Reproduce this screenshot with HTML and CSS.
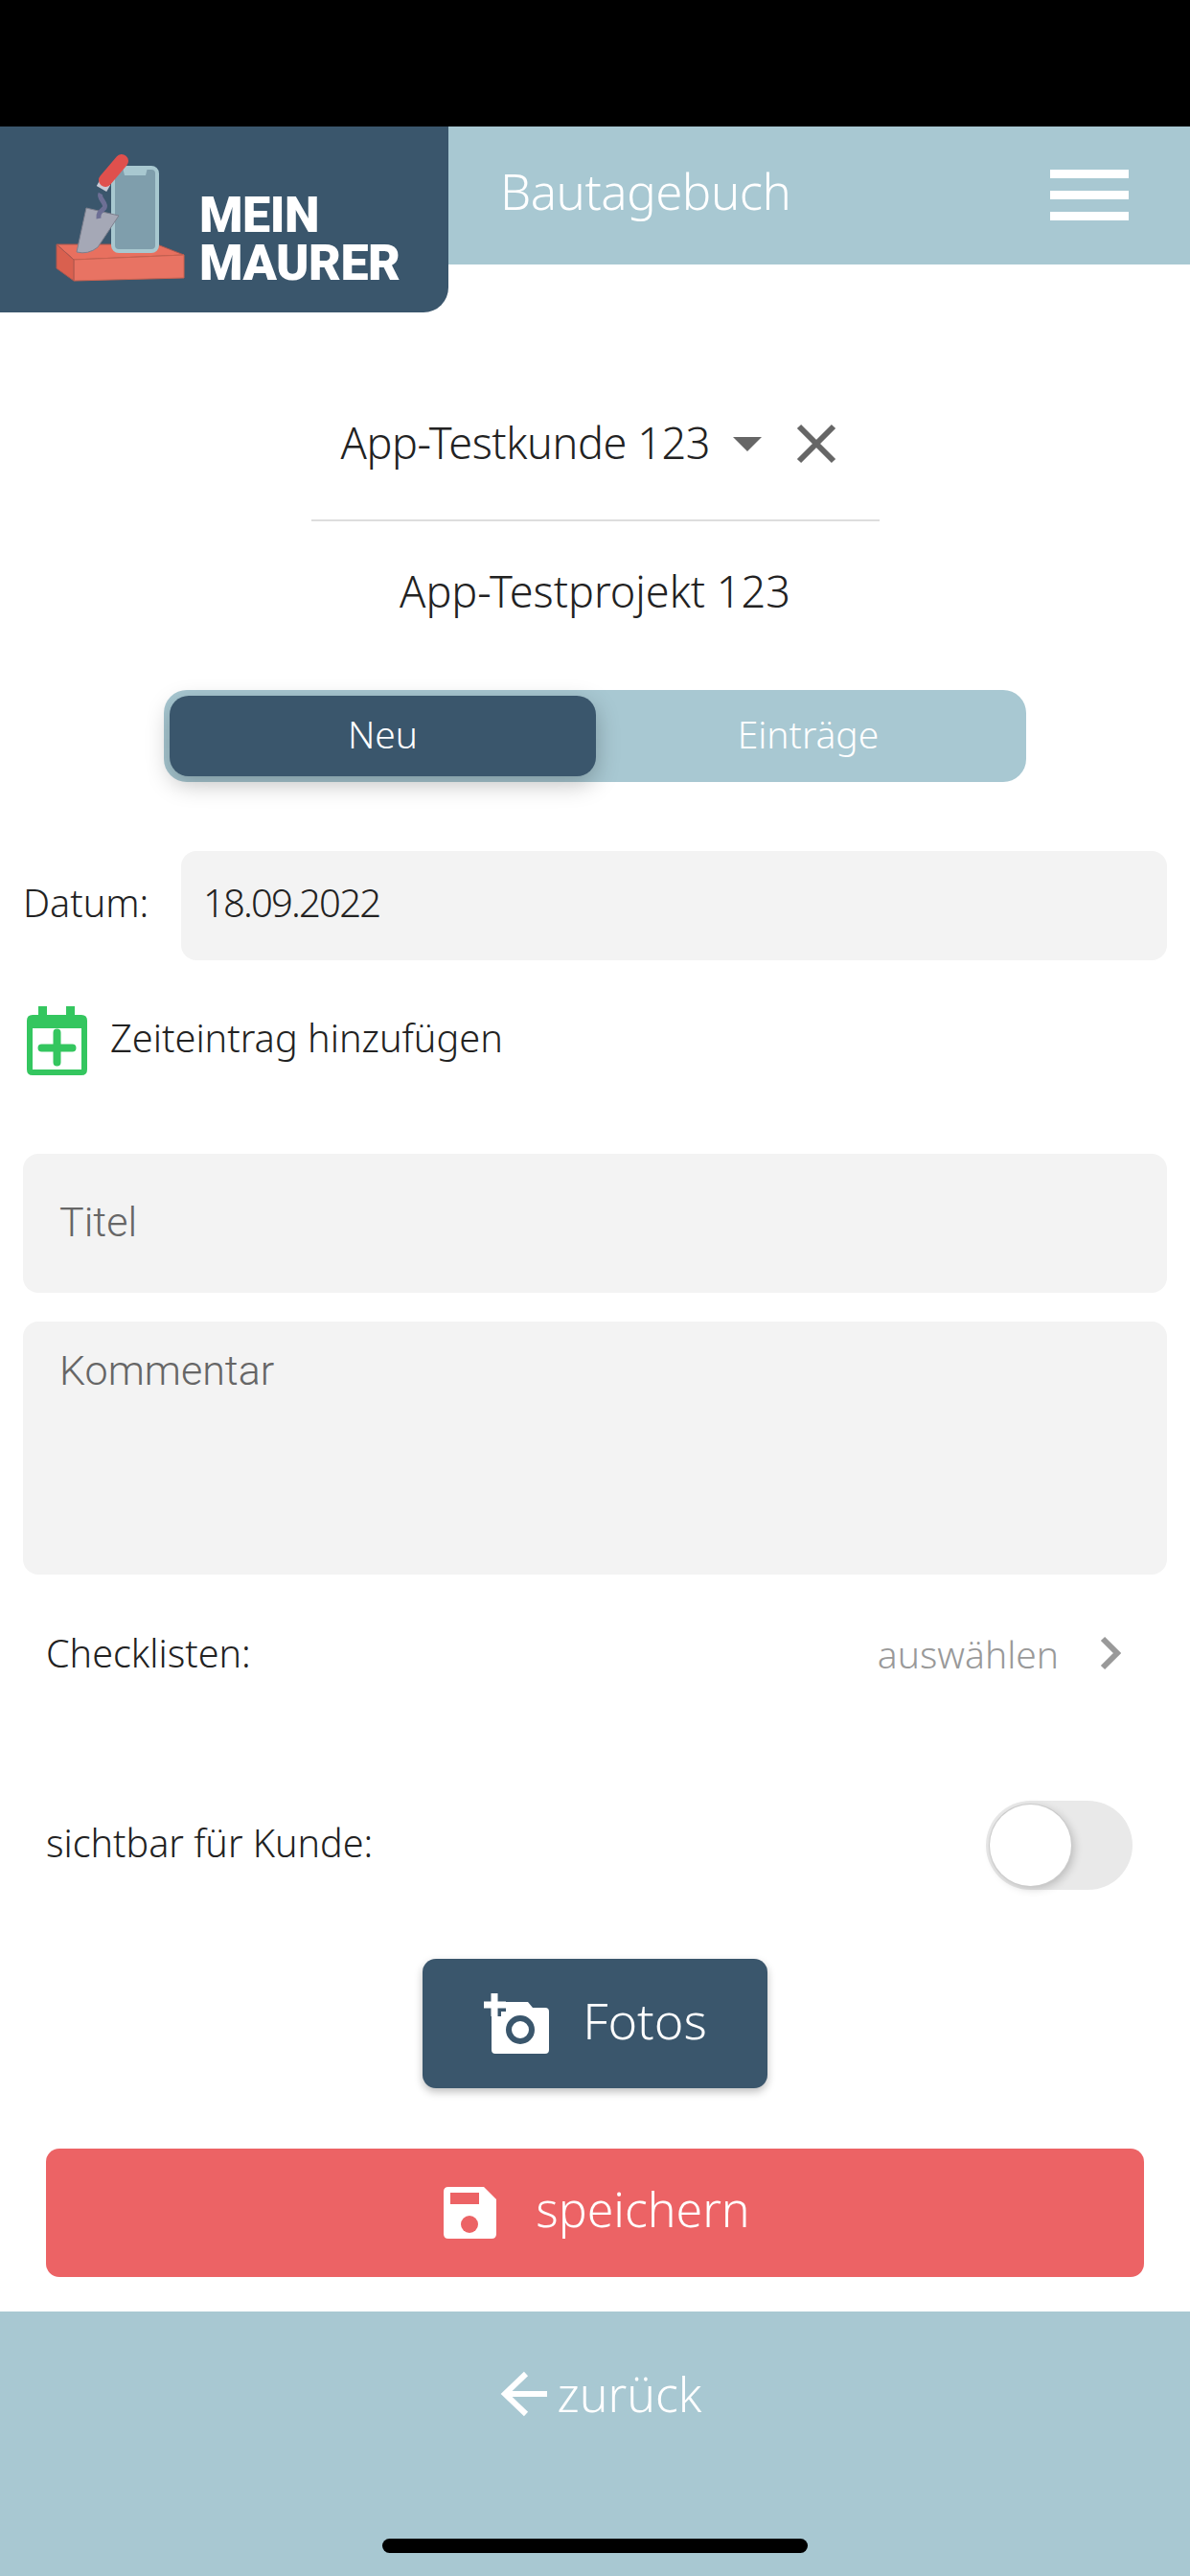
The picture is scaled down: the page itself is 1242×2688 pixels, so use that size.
FILE: index.html
```html
<!DOCTYPE html>
<html lang="de">
<head>
    <meta charset="UTF-8">
    <meta name="viewport" content="width=device-width, initial-scale=1.0">
    <title>Bautagebuch</title>
    <link rel="stylesheet" href="styles.css">
</head>
<body>
    <div class="status-bar"></div>

    <header class="app-header">
        <div class="logo">
            <svg class="logo-mark" width="140" height="136" viewBox="0 0 140 136">
                <polygon points="3,95 108,95 136,106 21,111" fill="#e8705f" stroke="#a9574f"/>
                <polygon points="21,111 136,106 136,130 21,133" fill="#e87363" stroke="#c8614f"/>
                <polygon points="3,95 21,111 21,133 3,120" fill="#d9604f" stroke="#a9574f"/>
                <rect x="62" y="15" width="46" height="87" rx="6" fill="#7f9eac" stroke="#a8c8d0" stroke-width="4"/>
                <polygon points="72,15 98,15 96,23 74,23" fill="#a8c8d0"/>
                <path d="M34 57 L68 65 L46 98 Q36 106 24 103 Z" fill="#a5a8b6" stroke="#7d7f8d"/>
                <path d="M49 42 C46 47 56 52 53 57 C50 60 46 62 47 68" fill="none" stroke="#6d6f95" stroke-width="5"/>
                <line x1="50" y1="37" x2="54" y2="30" stroke="#c9cbd6" stroke-width="12"/>
                <line x1="54" y1="28" x2="71" y2="8" stroke="#e0504d" stroke-width="14" stroke-linecap="round"/>
            </svg>
            <div class="logo-text">MEIN<br>MAURER</div>
        </div>
        <div class="header-title">Bautagebuch</div>
        <div class="hamburger"><span></span><span></span><span></span></div>
    </header>

    <main class="content">
        <div class="customer-select">
            <span class="customer-name">App-Testkunde 123</span>
            <span class="caret"></span>
            <svg class="clear-icon" width="42" height="42" viewBox="0 0 42 42">
                <path d="M3 3 L39 39 M39 3 L3 39" stroke="#666" stroke-width="6"/>
            </svg>
        </div>
        <div class="project-name">App-Testprojekt 123</div>

        <div class="segment">
            <div class="segment-item active">Neu</div>
            <div class="segment-item">Einträge</div>
        </div>

        <div class="date-row">
            <span class="date-label">Datum:</span>
            <div class="date-input">18.09.2022</div>
        </div>

        <div class="time-row">
            <svg width="63" height="72" viewBox="0 0 63 72">
                <path d="M12 0 H21 V9 H41 V0 H50 V9 H57 Q63 9 63 15 V66 Q63 72 57 72 H6 Q0 72 0 66 V15 Q0 9 6 9 H12 Z M6 23 V66 H57 V23 Z" fill="#34c65f" fill-rule="evenodd"/>
                <path d="M15.500 43.500 H47.500 M31.500 27.500 V58.500" stroke="#34c65f" stroke-width="8" stroke-linecap="round"/>
            </svg>
            <span class="time-label">Zeiteintrag hinzufügen</span>
        </div>

        <div class="field field-title">Titel</div>
        <div class="field field-comment">Kommentar</div>

        <div class="option-row checklist-row">
            <span>Checklisten:</span>
            <span class="choose">
                <span class="choose-text">auswählen</span>
                <svg width="22" height="36" viewBox="0 0 22 36">
                    <polyline points="3,3 18,18 3,33" fill="none" stroke="#999" stroke-width="6"/>
                </svg>
            </span>
        </div>

        <div class="option-row visible-row">
            <span class="visible-label">sichtbar für Kunde:</span>
            <div class="toggle"><div class="toggle-knob"></div></div>
        </div>

        <button class="photo-btn">
            <svg width="70" height="64" viewBox="0 0 70 64">
                <path d="M9 20 Q9 9 20 9 H47 L52 15 H65 Q69 15 69 19 V59 Q69 63 65 63 H13 Q9 63 9 59 Z" fill="#fff"/>
                <path d="M0 12 H24 M12 0 V24" stroke="#3a566c" stroke-width="14"/>
                <path d="M1 12 H24 M12 0 V24" stroke="#fff" stroke-width="7"/>
                <circle cx="39" cy="38" r="12" fill="#fff" stroke="#3a566c" stroke-width="6"/>
            </svg>
            <span class="btn-label">Fotos</span>
        </button>

        <button class="save-btn">
            <svg width="55" height="54" viewBox="0 0 55 54">
                <path d="M5 0 H42 L55 13 V49 Q55 54 50 54 H5 Q0 54 0 49 V5 Q0 0 5 0 Z" fill="#fff"/>
                <rect x="7" y="6" width="30" height="12" fill="#ec6365"/>
                <circle cx="27" cy="39" r="9" fill="#ec6365"/>
            </svg>
            <span class="btn-label">speichern</span>
        </button>
    </main>

    <footer class="app-footer">
        <div class="back-link">
            <svg width="49" height="48" viewBox="0 0 49 48">
                <path d="M49 24 H5 M27 3 L5 24 L27 45" fill="none" stroke="#fff" stroke-width="6"/>
            </svg>
            <span>zurück</span>
        </div>
        <div class="home-bar"></div>
    </footer>
</body>
</html>
```

FILE: styles.css
```css
* {
    box-sizing: border-box;
}

body {
    margin: 0;
    height: 2688px;
    display: flex;
    flex-direction: column;
    font-family: "Noto Sans", sans-serif;
    font-weight: 350;
    color: #222;
    background: white;
    overflow: hidden;
}

.status-bar {
    height: 132px;
    background: black;
}

.app-header {
    height: 144px;
    display: flex;
    align-items: flex-start;
    background: #a8c8d2;
    color: white;
}

.logo {
    position: relative;
    width: 468px;
    height: 194px;
    display: flex;
    gap: 12px;
    padding: 28px 0 0 56px;
    background: #3a566c;
    border-radius: 0 0 26px 0;
}

.logo-text {
    margin-top: 40px;
    font-family: "Roboto", sans-serif;
    font-weight: 900;
    font-size: 52px;
    line-height: 50px;
    letter-spacing: -0.5px;
}

.header-title {
    margin: 35px 0 0 54px;
    font-size: 51px;
    line-height: 64px;
    letter-spacing: -0.5px;
}

.hamburger {
    margin: 45px 64px 0 auto;
    width: 82px;
    display: flex;
    flex-direction: column;
    gap: 13px;
}

.hamburger span {
    height: 9px;
    background: white;
}

.content {
    flex: 1;
    padding: 0 24px;
}

.customer-select {
    width: 593px;
    height: 118px;
    margin: 150px auto 0;
    padding: 0 0 42px 31px;
    display: flex;
    align-items: center;
    border-bottom: 2px solid #ddd;
    font-size: 45px;
    letter-spacing: -0.4px;
}

.customer-name {
    margin-bottom: 4px;
}

.caret {
    margin-left: 24px;
    border-left: 15px solid transparent;
    border-right: 15px solid transparent;
    border-top: 15px solid #666;
}

.clear-icon {
    margin-left: 36px;
}

.project-name {
    text-align: center;
    font-size: 45px;
    line-height: 146px;
}

.segment {
    width: 900px;
    height: 96px;
    margin: 30px auto 0;
    padding: 6px;
    display: flex;
    background: #a8c8d2;
    border-radius: 24px;
    color: white;
    font-size: 39px;
}

.segment-item {
    flex: 1;
    display: flex;
    align-items: center;
    justify-content: center;
    padding-bottom: 6px;
}

.segment-item.active {
    flex: none;
    width: 445px;
    background: #3a566c;
    border-radius: 20px;
    box-shadow: 0 8px 24px rgba(0, 0, 0, 0.25);
}

.date-row {
    margin-top: 72px;
    display: flex;
    align-items: center;
    font-size: 39.500px;
}

.date-label {
    width: 165px;
}

.date-input {
    flex: 1;
    height: 114px;
    padding: 0 0 7px 23px;
    display: flex;
    align-items: center;
    background: #f3f3f3;
    border-radius: 16px;
    font-size: 40px;
    letter-spacing: -1.8px;
}

.date-label {
    padding-bottom: 7px;
}

.time-row {
    margin: 48px 0 0 4px;
    display: flex;
    align-items: center;
    gap: 24px;
    font-size: 39.700px;
}

.time-label {
    margin-bottom: 6px;
}

.field {
    padding-left: 38px;
    background: #f3f3f3;
    border-radius: 16px;
    font-family: "Roboto", sans-serif;
    font-weight: 350;
    font-size: 43px;
    color: #666;
}

.field-title {
    height: 145px;
    margin-top: 82px;
    padding-bottom: 4px;
    display: flex;
    align-items: center;
}

.field-comment {
    height: 264px;
    margin-top: 30px;
    padding-top: 26px;
}

.option-row {
    display: flex;
    align-items: center;
    justify-content: space-between;
    padding-left: 24px;
    font-size: 39.500px;
}

.checklist-row {
    height: 80px;
    margin-top: 42px;
    padding-right: 48px;
}

.choose {
    display: flex;
    align-items: center;
    gap: 43px;
    color: #999;
    font-size: 39px;
}

.visible-row {
    height: 93px;
    margin-top: 114px;
    padding-right: 36px;
}

.visible-label {
    margin-bottom: 6px;
}

.toggle {
    width: 153px;
    height: 93px;
    padding: 4px;
    background: #e9e9e9;
    border-radius: 47px;
}

.toggle-knob {
    width: 85px;
    height: 85px;
    background: white;
    border-radius: 50%;
    box-shadow: 0 0 0 1px #ccc, 3px 3px 10px rgba(0, 0, 0, 0.2);
}

.photo-btn {
    width: 360px;
    height: 135px;
    margin: 72px auto 0;
    display: flex;
    align-items: center;
    justify-content: center;
    gap: 34px;
    border: none;
    background: #3a566c;
    border-radius: 14px;
    box-shadow: 0 4px 8px rgba(0, 0, 0, 0.25);
    color: white;
    font-family: inherit;
    font-weight: inherit;
    font-size: 52px;
}

.save-btn {
    width: 1146px;
    height: 134px;
    margin: 63px 24px 0;
    padding-left: 10px;
    display: flex;
    align-items: center;
    justify-content: center;
    gap: 41px;
    border: none;
    background: #ec6365;
    border-radius: 14px;
    color: white;
    font-family: inherit;
    font-weight: inherit;
    font-size: 50px;
}

.btn-label {
    margin-bottom: 8px;
}

.app-footer {
    position: relative;
    height: 276px;
    padding: 52px 0 0 12px;
    background: #a8c8d2;
    color: white;
}

.back-link {
    display: flex;
    justify-content: center;
    align-items: center;
    gap: 11px;
    font-size: 50px;
}

.home-bar {
    position: absolute;
    left: 399px;
    bottom: 24px;
    width: 444px;
    height: 15px;
    background: black;
    border-radius: 8px;
}
```
